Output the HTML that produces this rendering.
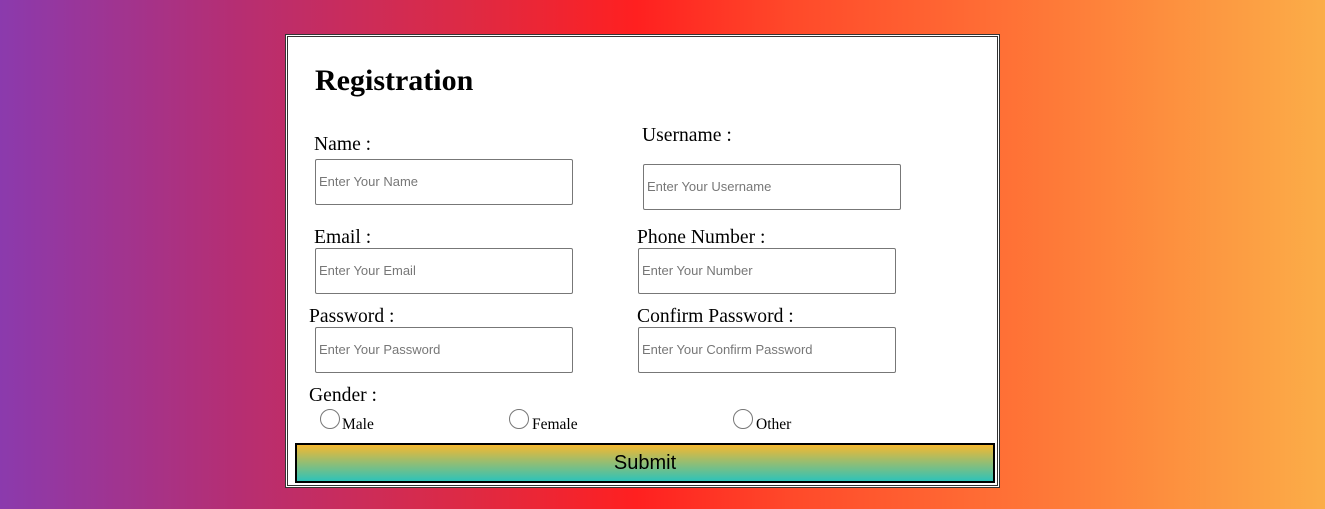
<!DOCTYPE html>
<html><head><style>
*{margin:0;padding:0;box-sizing:border-box}
body{width:1325px;height:509px;overflow:hidden;background:linear-gradient(to right,#8b3aad 0%,#b62e72 18%,#dd2a45 35%,#ff2020 48%,#ff4a2a 60%,#ff6e35 75%,#fd8f3e 88%,#fbad48 100%);font-family:"Liberation Serif",serif;position:relative}
.box{position:absolute;left:285px;top:34px;width:715px;height:454px;background:#fff;border:3px double #333}
h1{position:absolute;left:315px;top:64px;font-size:30px;font-weight:bold}
.l{position:absolute;font-size:19.6px}
.i{position:absolute;width:258px;height:46px;border:1px solid #777;border-radius:2px;font-family:"Liberation Sans",sans-serif;font-size:13px;color:#777;padding:14px 0 0 3px;background:#fff}
.r{position:absolute;width:20px;height:20px;border:1px solid #777;border-radius:50%;background:#fff}
.rl{position:absolute;font-size:15.5px}
.btn{position:absolute;left:295px;top:443px;width:700px;height:40px;border:2px solid #000;background:linear-gradient(#f5b830,#2ec3b9);font-family:"Liberation Sans",sans-serif;font-size:20px;text-align:center;line-height:36px}
</style></head><body>
<div class="box"></div>
<h1>Registration</h1>
<div class="l" style="left:314px;top:134px">Name :</div>
<div class="i" style="left:315px;top:159px">Enter Your Name</div>
<div class="l" style="left:642px;top:125px">Username :</div>
<div class="i" style="left:643px;top:164px">Enter Your Username</div>
<div class="l" style="left:314px;top:227px">Email :</div>
<div class="i" style="left:315px;top:248px">Enter Your Email</div>
<div class="l" style="left:637px;top:227px">Phone Number :</div>
<div class="i" style="left:638px;top:248px">Enter Your Number</div>
<div class="l" style="left:309px;top:306px">Password :</div>
<div class="i" style="left:315px;top:327px">Enter Your Password</div>
<div class="l" style="left:637px;top:306px">Confirm Password :</div>
<div class="i" style="left:638px;top:327px">Enter Your Confirm Password</div>
<div class="l" style="left:309px;top:385px">Gender :</div>
<div class="r" style="left:320px;top:409px"></div><div class="rl" style="left:342px;top:416px">Male</div>
<div class="r" style="left:509px;top:409px"></div><div class="rl" style="left:532px;top:416px">Female</div>
<div class="r" style="left:733px;top:409px"></div><div class="rl" style="left:756px;top:416px">Other</div>
<div class="btn">Submit</div>
</body></html>
